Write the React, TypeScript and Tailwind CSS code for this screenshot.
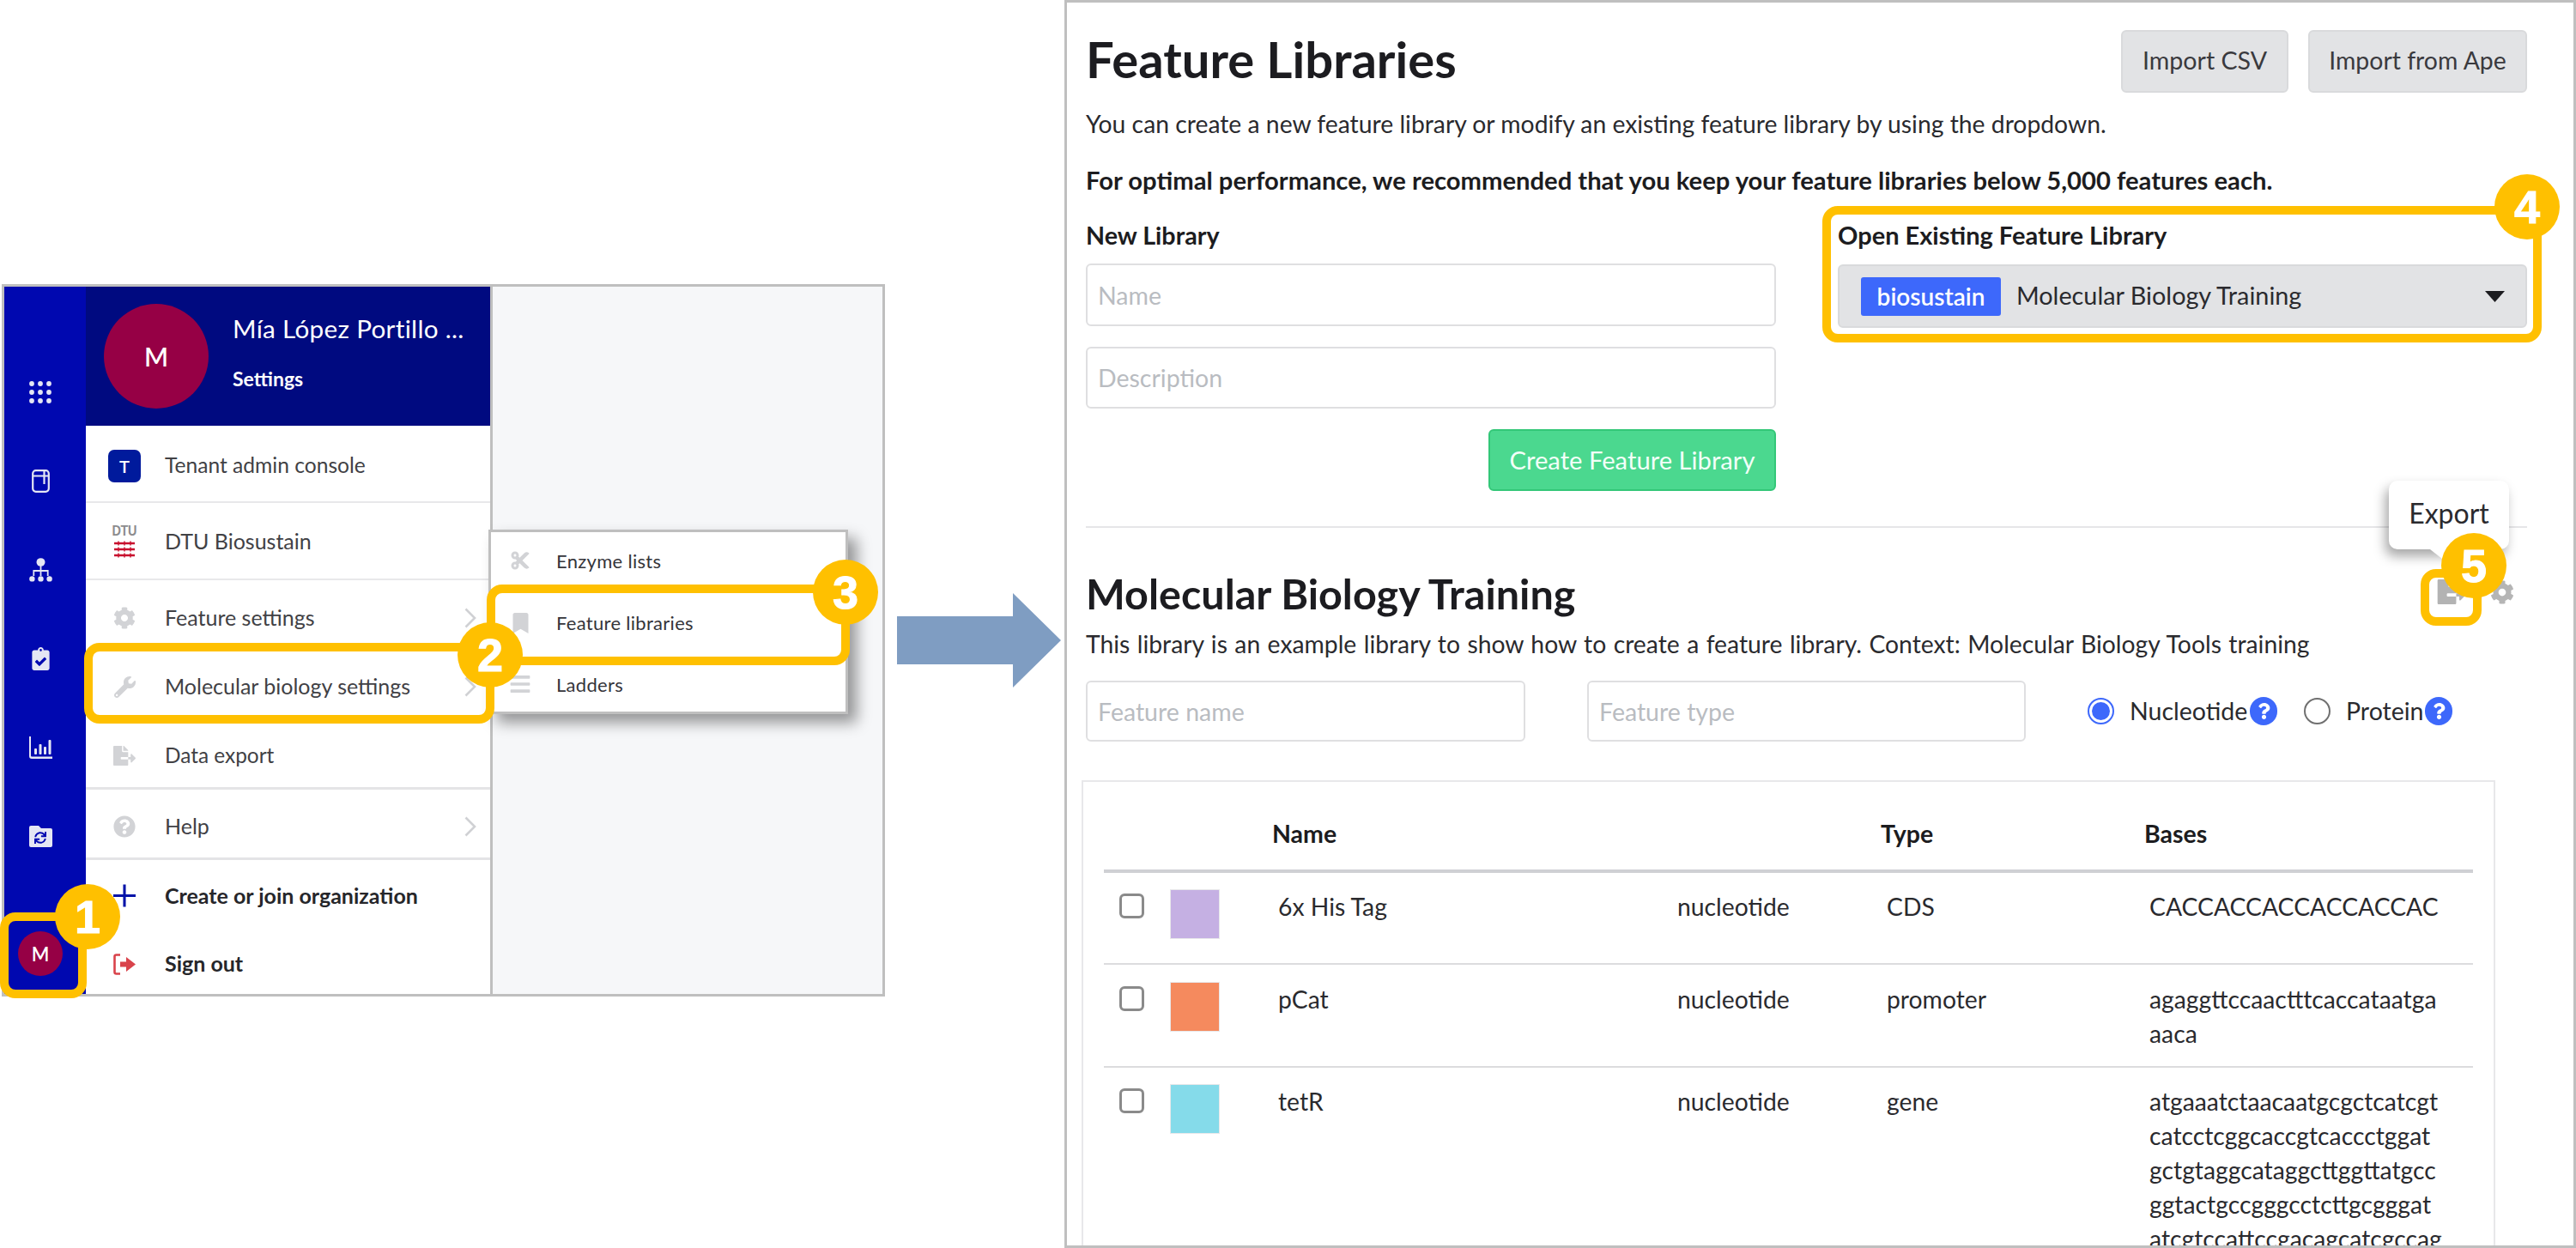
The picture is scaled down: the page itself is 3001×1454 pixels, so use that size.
import React from "react";
import { FaCog, FaWrench, FaFileExport, FaQuestionCircle, FaBookmark, FaBars, FaCut, FaSync, FaClipboardCheck, FaQuestion } from "react-icons/fa";

const font = "font-['Lato','Liberation_Sans',sans-serif]";

function GridIcon() {
  const dots = [];
  for (let y = 0; y < 3; y++) for (let x = 0; x < 3; x++) dots.push(<circle key={`${x}${y}`} cx={3 + x * 10} cy={3 + y * 10} r="2.9" />);
  return <svg width="26" height="26" viewBox="0 0 26 26" fill="#e4e6f4">{dots}</svg>;
}
function BookIcon() {
  return (
    <svg width="21" height="27" viewBox="0 0 21 27" fill="none" stroke="#e4e6f4" strokeWidth="2.2">
      <rect x="1.2" y="1.2" width="18.6" height="24.6" rx="3.5" />
      <path d="M1.2 7.5H19.8M14.5 1.5V17" />
    </svg>
  );
}
function SitemapIcon() {
  return (
    <svg width="27" height="28" viewBox="0 0 27 28" fill="#e4e6f4">
      <ellipse cx="13.5" cy="5" rx="5" ry="4.8" />
      <path d="M12.6 9h1.8v5h8.2v7h-1.8v-5h-6.4v5h-1.8v-5H6.2v5H4.4v-7h8.2z" />
      <circle cx="3.4" cy="24.4" r="3.2" /><circle cx="13.5" cy="24.4" r="3.2" /><circle cx="23.6" cy="24.4" r="3.2" />
    </svg>
  );
}
function ChartIcon() {
  return (
    <svg width="27" height="26" viewBox="0 0 27 26" fill="#e4e6f4">
      <path d="M0 0h2v22.5q0 1 1 1h24v2.5H3q-3 0-3-3z" />
      <rect x="6" y="14" width="3" height="7" rx="1" /><rect x="11.5" y="9" width="3" height="12" rx="1" />
      <rect x="17" y="12" width="3" height="9" rx="1" /><rect x="22.5" y="4" width="3" height="17" rx="1" />
    </svg>
  );
}
function FolderSync() {
  return (
    <span className="relative flex h-[25px] w-[27px] items-center justify-center">
      <svg width="27" height="25" viewBox="0 0 27 25" className="absolute inset-0" fill="#e4e6f4">
        <path d="M2 0h9l3 3h11q2 0 2 2v18q0 2-2 2H2q-2 0-2-2V2q0-2 2-2z" />
      </svg>
      <FaSync className="relative mt-[3px] h-[14px] w-[14px] text-[#0008b0]" />
    </span>
  );
}
function DtuLogo() {
  return (
    <span className="flex w-[26px] flex-col items-center">
      <span className="font-['Liberation_Sans',sans-serif] text-[17px] font-bold leading-[16px] tracking-[-0.5px] text-[#8c8c8e] scale-x-[0.85]">DTU</span>
      <svg width="26" height="22" viewBox="0 0 26 22" className="mt-[2px]" fill="none" stroke="#c8102e" strokeWidth="2.4">
        <path d="M1 4H25M1 11H25M1 18H25" />
        <path d="M6 1.5V6.5M13 1.5V6.5M20 1.5V6.5M6 8.5V13.5M13 8.5V13.5M20 8.5V13.5M6 15.5V20.5M13 15.5V20.5M20 15.5V20.5" strokeWidth="1.4" />
      </svg>
    </span>
  );
}
function SignOutIcon() {
  return (
    <svg width="26" height="25" viewBox="0 0 26 25" fill="none">
      <path d="M8 1.5H3.5Q1.5 1.5 1.5 3.5V21.5Q1.5 23.5 3.5 23.5H8" stroke="#d9434b" strokeWidth="2.6" />
      <path d="M8 9.5H15V4L26 12.5 15 21V15.5H8z" fill="#d9434b" />
    </svg>
  );
}
function PlusIcon() {
  return (
    <svg width="27" height="27" viewBox="0 0 27 27" fill="none" stroke="#0012a8" strokeWidth="3.2">
      <path d="M13.5 0V27M0 13.5H27" />
    </svg>
  );
}
function Chevron() {
  return (
    <svg width="14" height="24" viewBox="0 0 14 24" className="ml-auto mr-[16px] shrink-0" fill="none" stroke="#d0d1d4" strokeWidth="2.6">
      <path d="M1.5 1.5L12 12 1.5 22.5" />
    </svg>
  );
}

function MenuRow({ icon, label, h, chevron, bold, line, pt, size }: { icon: React.ReactNode; label: string; h: string; chevron?: boolean; bold?: boolean; line?: string; pt?: string; size?: string }) {
  return (
    <div className={`flex shrink-0 items-center ${h} ${line ?? ""} ${pt ?? ""}`}>
      <span className="ml-[32px] flex w-[26px] justify-center">{icon}</span>
      <span className={`ml-[34px] ${size ?? "text-[25px]"} ${bold ? "font-bold text-[#26262a]" : "text-[#414145]"}`}>{label}</span>
      {chevron && <Chevron />}
    </div>
  );
}

function SubRow({ icon, label, h }: { icon: React.ReactNode; label: string; h: string }) {
  return (
    <div className={`flex items-center ${h}`}>
      <span className="ml-[22px] flex w-[24px] justify-center text-[#d2d3d6]">{icon}</span>
      <span className="ml-[30px] text-[22px] tracking-[0.3px] text-[#35353a]">{label}</span>
    </div>
  );
}

function LeftPanel() {
  return (
    <div className="relative ml-[2px] mt-[331px] flex h-[830px] w-[1029px] shrink-0 border-[3px] border-[#bfbfbf]">
      <div className="flex w-[95px] shrink-0 flex-col items-center bg-[#0008b0] pr-[11px] pt-[71px]">
        <div className="flex h-[103.5px] items-center"><GridIcon /></div>
        <div className="flex h-[103.5px] items-center"><BookIcon /></div>
        <div className="flex h-[103.5px] items-center"><SitemapIcon /></div>
        <div className="flex h-[103.5px] items-center"><FaClipboardCheck className="h-[27px] w-[21px] text-[#e4e6f4]" /></div>
        <div className="flex h-[103.5px] items-center"><ChartIcon /></div>
        <div className="flex h-[103.5px] items-center"><FolderSync /></div>
        <div className="mb-[21px] mt-auto flex h-[52px] w-[52px] items-center justify-center rounded-full bg-[#960045] text-[22px] font-semibold text-white">M</div>
      </div>
      <div className="flex w-[474px] shrink-0 flex-col border-r-[3px] border-[#bfbfbf] bg-white">
        <div className="flex h-[162px] shrink-0 items-center bg-[#000a80] pl-[21px]">
          <div className="flex h-[122px] w-[122px] shrink-0 items-center justify-center rounded-full bg-[#960045] text-[30px] font-semibold text-white">M</div>
          <div className="-mt-[12px] ml-[28px] flex flex-col">
            <span className="text-[29.7px] leading-[36px] tracking-[0.3px] text-white">Mía López Portillo ...</span>
            <span className="mt-[28px] text-[23px] font-bold leading-[24px] text-white">Settings</span>
          </div>
        </div>
        <MenuRow h="h-[90px]" pt="pt-[5px]" size="text-[24.6px]" line="border-b-2 border-[#e8e8ea]" label="Tenant admin console" icon={<span className="flex h-[38px] w-[38px] shrink-0 items-center justify-center rounded-[7px] bg-[#001a9c] text-[20px] font-semibold text-white">T</span>} />
        <MenuRow h="h-[90px]" pt="pt-[2px]" line="border-b-2 border-[#e8e8ea]" label="DTU Biosustain" icon={<DtuLogo />} />
        <MenuRow h="h-[88px]" label="Feature settings" chevron icon={<FaCog className="h-[26px] w-[26px] text-[#d2d3d6]" />} />
        <MenuRow h="h-[72px]" label="Molecular biology settings" chevron icon={<FaWrench className="h-[25px] w-[25px] text-[#d2d3d6]" />} />
        <MenuRow h="h-[84px]" pt="pt-[8px]" size="text-[24.4px]" line="border-b-[3px] border-[#e4e4e6]" label="Data export" icon={<FaFileExport className="h-[25px] w-[28px] text-[#d2d3d6]" />} />
        <MenuRow h="h-[82px]" pt="pt-[6px]" line="border-b-[3px] border-[#e4e4e6]" label="Help" chevron icon={<FaQuestionCircle className="h-[26px] w-[26px] text-[#d2d3d6]" />} />
        <MenuRow h="h-[83px]" bold label="Create or join organization" icon={<PlusIcon />} />
        <MenuRow h="h-[73px]" pt="pt-[3px]" bold label="Sign out" icon={<SignOutIcon />} />
      </div>
      <div className="flex-1 bg-[#f6f7f9]" />
      <div className="absolute left-[564px] top-[283px] flex h-[215px] w-[419px] flex-col border-[3px] border-[#bfbfbf] bg-white shadow-[10px_10px_16px_rgba(0,0,0,0.4)]">
        <SubRow h="h-[66px]" label="Enzyme lists" icon={<FaCut className="h-[24px] w-[24px]" />} />
        <SubRow h="h-[79px]" label="Feature libraries" icon={<FaBookmark className="h-[24px] w-[19px]" />} />
        <SubRow h="h-[64px]" label="Ladders" icon={<FaBars className="h-[26px] w-[24px]" />} />
      </div>
    </div>
  );
}

function Arrow() {
  return (
    <svg width="191" height="110" viewBox="0 0 191 110" className="ml-[14px] mt-[691px] shrink-0" fill="#7f9dc2">
      <path d="M0 27H135V0L191 55 135 110V83H0z" />
    </svg>
  );
}

const inputCls = "h-full w-full rounded-[6px] border-2 border-[#dfdfe1] bg-white px-[12px] text-[28.5px] outline-none placeholder:text-[#b9bcc1]";

function Help() {
  return <span className="flex h-[33px] w-[32px] shrink-0 items-center justify-center rounded-full bg-[#3d68fb]"><FaQuestion className="h-[19px] w-[15px] text-white" /></span>;
}

const rows = [
  { name: "6x His Tag", type: "CDS", color: "bg-[#c5b0e3]", h: "h-[107px]", pt: "pt-[19px]", bases: ["CACCACCACCACCACCAC"] },
  { name: "pCat", type: "promoter", color: "bg-[#f58a5e]", h: "h-[120px]", pt: "pt-[20px]", bases: ["agaggttccaactttcaccataatga", "aaca"] },
  { name: "tetR", type: "gene", color: "bg-[#85dbea]", h: "h-[260px]", pt: "pt-[19px]", bases: ["atgaaatctaacaatgcgctcatcgt", "catcctcggcaccgtcaccctggat", "gctgtaggcataggcttggttatgcc", "ggtactgccgggcctcttgcgggat", "atcgtccattccgacagcatcgccag"] },
];

function RightPanel() {
  return (
    <div className="ml-[4px] h-[1454px] w-[1761px] shrink-0 overflow-hidden border-[3px] border-[#bfbfbf] bg-white pl-[22px] pr-[54px] text-[#2a2a2e]">
      <div className="mt-[33px] flex h-[72px] items-center justify-between">
        <h1 className="-mt-[6px] text-[58px] font-bold leading-[60px] text-[#1c1c20]">Feature Libraries</h1>
        <div className="flex h-full gap-[23px]">
          <button className="-mt-[1px] w-[195px] rounded-[6px] border-2 border-[#d9dadc] bg-[#e2e3e5] pb-[2px] text-[28.6px] text-[#3a3a3e]">Import CSV</button>
          <button className="-mt-[1px] w-[255px] rounded-[6px] border-2 border-[#d9dadc] bg-[#e2e3e5] pb-[2px] text-[28.4px] text-[#3a3a3e]">Import from Ape</button>
        </div>
      </div>
      <p className="mt-[16px] text-[28.3px] leading-[40px]">You can create a new feature library or modify an existing feature library by using the dropdown.</p>
      <p className="mt-[26px] text-[29.2px] font-bold leading-[40px] text-[#1c1c20]">For optimal performance, we recommended that you keep your feature libraries below 5,000 features each.</p>
      <div className="mt-[24px] flex gap-[72px]">
        <div className="flex w-[804px] shrink-0 flex-col">
          <span className="text-[28.7px] font-bold leading-[40px] text-[#1c1c20]">New Library</span>
          <div className="mt-[13px] h-[73px]"><input className={inputCls} placeholder="Name" readOnly /></div>
          <div className="mt-[24px] h-[72px]"><input className={inputCls} placeholder="Description" readOnly /></div>
          <button className="ml-auto mt-[24px] h-[72px] w-[335px] rounded-[6px] border-2 border-[#33c778] bg-[#4bd88f] text-[29.2px] text-[#f2fff8]">Create Feature Library</button>
        </div>
        <div className="flex w-[803px] shrink-0 flex-col">
          <span className="text-[29px] font-bold leading-[40px] text-[#1c1c20]">Open Existing Feature Library</span>
          <div className="mt-[14px] flex h-[74px] items-center rounded-[6px] border-2 border-[#d9dadc] bg-[#e2e3e5] pl-[25px] pr-[24px]">
            <span className="flex h-[45px] w-[163px] items-center justify-center rounded-[3px] bg-[#3d68fb] text-[28px] font-semibold text-white">biosustain</span>
            <span className="ml-[18px] text-[28.8px] text-[#2a2a2e]">Molecular Biology Training</span>
            <svg width="23" height="13" viewBox="0 0 23 13" className="ml-auto" fill="#1c1c20"><path d="M0 0H23L11.5 13z" /></svg>
          </div>
        </div>
      </div>
      <div className="mt-[41px] h-[2px] bg-[#e6e6e8]" />
      <div className="mt-[50px] flex h-[52px] items-center justify-between">
        <h2 className="text-[48.5px] font-bold leading-[52px] text-[#1c1c20]">Molecular Biology Training</h2>
        <div className="-mt-[3px] mr-[15px] flex items-center gap-[28px]">
          <FaFileExport className="h-[29px] w-[34px] text-[#b3b3b3]" />
          <FaCog className="h-[28px] w-[28px] text-[#b5b5b5]" />
        </div>
      </div>
      <p className="mt-[13px] text-[28.3px] leading-[40px] [word-spacing:1.2px]">This library is an example library to show how to create a feature library. Context: Molecular Biology Tools training</p>
      <div className="mt-[23px] flex h-[71px] items-center">
        <div className="h-full w-[512px] shrink-0"><input className={inputCls} placeholder="Feature name" readOnly /></div>
        <div className="ml-[72px] h-full w-[511px] shrink-0"><input className={inputCls} placeholder="Feature type" readOnly /></div>
        <span className="ml-[72px] flex h-[31px] w-[31px] shrink-0 items-center justify-center rounded-full border-2 border-[#3d68fb]"><span className="h-[21px] w-[21px] rounded-full bg-[#3d68fb]" /></span>
        <span className="ml-[18px] w-[140px] shrink-0 text-[28.5px]">Nucleotide</span>
        <Help />
        <span className="ml-[31px] h-[31px] w-[31px] shrink-0 rounded-full border-2 border-[#707070]" />
        <span className="ml-[18px] w-[92px] shrink-0 text-[28.5px]">Protein</span>
        <Help />
      </div>
      <div className="-ml-[5px] mt-[45px] w-[1647px] border-x-2 border-t-2 border-[#e8e8ea] px-[24px] pb-[40px]">
        <div className="grid h-[106px] grid-cols-[196px_472px_237px_307px_383px] items-end border-b-4 border-[#cfd0d4] pb-[22px] text-[28.5px] font-bold leading-[40px] text-[#1c1c20]">
          <span />
          <span>Name</span>
          <span />
          <span>Type</span>
          <span>Bases</span>
        </div>
        {rows.map((r, i) => (
          <div key={r.name} className={`grid ${r.h} ${r.pt} grid-cols-[196px_472px_237px_307px_383px] content-start ${i < 2 ? "border-b-2 border-[#dcdcde]" : ""} text-[28.3px] leading-[40px]`}>
            <div className="flex items-start">
              <span className="ml-[18px] mt-[5px] h-[29px] w-[29px] rounded-[6px] border-[3px] border-[#8a8a8a] bg-white" />
              <span className={`ml-[30px] h-[58px] w-[58px] border border-[#e8e8ea] ${r.color}`} />
            </div>
            <span className="pl-[7px]">{r.name}</span>
            <span>nucleotide</span>
            <span className="pl-[7px]">{r.type}</span>
            <div className="flex flex-col pl-[6px]">
              {r.bases.map((b) => <span key={b}>{b}</span>)}
            </div>
          </div>
        ))}
      </div>
    </div>
  );
}

const badge = "absolute flex h-[76px] w-[76px] items-center justify-center rounded-full bg-[#ffc000] font-['Liberation_Sans',sans-serif] text-[54px] font-bold text-white [-webkit-text-stroke:1px_white]";
const ring = "absolute rounded-[18px] border-[10px] border-[#ffc000]";

export default function App() {
  return (
    <div className={`relative flex h-[1454px] w-[3001px] items-start overflow-hidden bg-white ${font}`}>
      <LeftPanel />
      <Arrow />
      <RightPanel />

      <div className="absolute left-[2783px] top-[560px] flex h-[80px] w-[140px] items-center justify-center rounded-[10px] bg-white pb-[4px] text-[32px] text-[#2a2a2e] shadow-[-4px_8px_14px_rgba(0,0,0,0.35)]">
        Export
        <svg width="30" height="22" viewBox="0 0 30 22" className="absolute left-[48px] top-[80px]" fill="#fff"><path d="M0 0H28V22z" /></svg>
      </div>

      <div className={`${ring} left-0 top-[1063px] h-[100px] w-[101px]`} />
      <div className={`${ring} left-[98px] top-[749px] h-[94px] w-[478px]`} />
      <div className={`${ring} left-[567px] top-[681px] h-[94px] w-[423px]`} />
      <div className={`${ring} left-[2123px] top-[240px] h-[159px] w-[838px]`} />
      <div className={`${ring} left-[2820px] top-[663px] h-[66px] w-[71px] rounded-[14px]`} />

      <div className={`${badge} left-[64px] top-[1030px]`}>1</div>
      <div className={`${badge} left-[533px] top-[725px]`}>2</div>
      <div className={`${badge} left-[947px] top-[652px]`}>3</div>
      <div className={`${badge} left-[2906px] top-[203px]`}>4</div>
      <div className={`${badge} left-[2844px] top-[621px]`}>5</div>
    </div>
  );
}
